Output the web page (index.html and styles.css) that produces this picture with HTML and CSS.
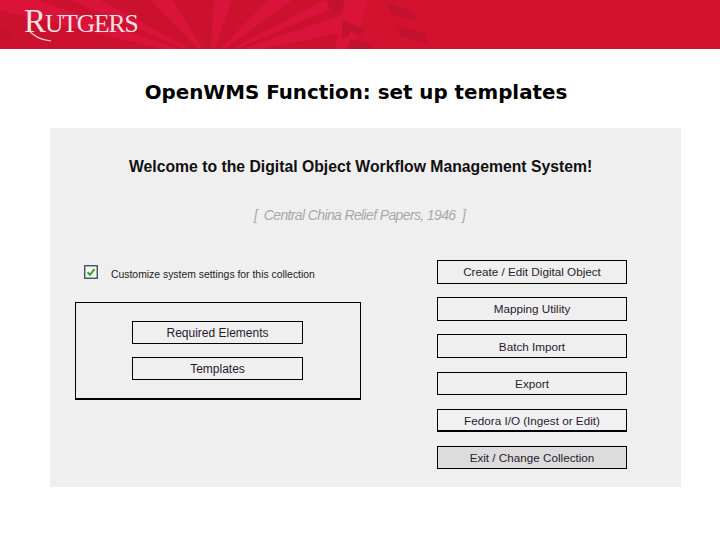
FILE: index.html
```html
<!DOCTYPE html>
<html lang="en">
<head>
<meta charset="utf-8">
<title>OpenWMS Function: set up templates</title>
<link rel="stylesheet" href="styles.css">
</head>
<body>
<header class="banner">
  <svg class="rays" width="720" height="49" viewBox="0 0 720 49" aria-hidden="true">
    <path fill="#cc112e" d="M0 0H345V49H0Z"/>
    <g fill="#d9133a">
      <path d="M210 60L-10 8V-6H20Z"/>
      <path d="M210 60L70 0H100Z"/>
      <path d="M210 60L150 0H172Z"/>
      <path d="M210 60L214 0H232Z"/>
      <path d="M210 60L268 0H292Z"/>
      <path d="M210 60L325 0H352Z"/>
      <path d="M210 60L345 14V32Z"/>
      <path d="M345 0H368L352 49H335Z"/>
    </g>
    <g fill="#c2122f">
      <path d="M0 27L12 31L10 40L0 36Z"/>
      <path d="M327 0H345L337 13L329 8Z"/>
      <path d="M342 20L366 30L360 35L350 31L349 36L342 38Z"/>
      <path d="M350 40L372 43L372 49H347Z"/>
      <path d="M386 2L412 12L418 21L392 14Z"/>
      <path d="M396 25L424 33L428 44L400 36Z"/>
    </g>
  </svg>
  <div class="logo"><span class="logo-cap">R</span>UTGERS</div>
  <svg class="logo-tail" width="30" height="10" viewBox="0 0 30 10" aria-hidden="true">
    <path d="M0 0C5 4 10 8 21 9" fill="none" stroke="#f0d8da" stroke-width="1.2"/>
  </svg>
</header>

<h1 class="title">OpenWMS Function: set up templates</h1>

<main class="panel">
  <h2 class="welcome">Welcome to the Digital Object Workflow Management System!</h2>
  <p class="collection">[ &nbsp;Central China Relief Papers, 1946 &nbsp;]</p>
  <div class="columns">
    <section class="left">
      <label class="check-row">
        <svg class="check" width="14" height="14" viewBox="0 0 14 14" aria-hidden="true">
          <rect x=".75" y=".75" width="12.5" height="12.5" fill="#f4f6f2" stroke="#2c4a56" stroke-width="1.3"/>
          <path d="M3.5 7.2L6 9.8L10.5 4.2" fill="none" stroke="#3f9a35" stroke-width="2"/>
        </svg>
        <span>Customize system settings for this collection</span>
      </label>
      <div class="settings">
        <div class="btn btn-inner">Required Elements</div>
        <div class="btn btn-inner">Templates</div>
      </div>
    </section>
    <nav class="right">
      <div class="btn">Create / Edit Digital Object</div>
      <div class="btn">Mapping Utility</div>
      <div class="btn">Batch Import</div>
      <div class="btn">Export</div>
      <div class="btn btn-heavy">Fedora I/O (Ingest or Edit)</div>
      <div class="btn btn-exit">Exit / Change Collection</div>
    </nav>
  </div>
</main>
</body>
</html>
```
FILE: styles.css
```css
* {
  box-sizing: border-box;
}

html,
body {
  margin: 0;
  padding: 0;
  background: #fff;
}

body {
  width: 720px;
  height: 540px;
  overflow: hidden;
  font-family: "Liberation Sans", Arial, sans-serif;
  color: #111;
}

.banner {
  position: relative;
  height: 49px;
  padding: 8px 0 0 24px;
  background: #d2122f;
}

.rays {
  position: absolute;
  top: 0;
  left: 0;
}

.logo {
  position: relative;
  font-family: "Liberation Serif", "Times New Roman", serif;
  font-size: 25.5px;
  line-height: 27px;
  letter-spacing: -1.1px;
  color: #f3e0e2;
}

.logo-cap {
  font-size: 33px;
  line-height: 27px;
}

.logo-tail {
  position: absolute;
  top: 32px;
  left: 30px;
}

.title {
  margin: 32px 0 0;
  height: 24px;
  padding-right: 8px;
  font-family: "DejaVu Sans", Verdana, sans-serif;
  font-size: 19.85px;
  line-height: 24px;
  font-weight: 700;
  text-align: center;
  color: #000;
}

.panel {
  width: 631px;
  height: 359px;
  margin: 23px 0 0 50px;
  padding: 28px 25px 0;
  background: #efefef;
}

.welcome {
  margin: 0 0 0 54px;
  width: 462px;
  font-size: 15.75px;
  line-height: 22px;
  font-weight: 700;
  white-space: nowrap;
  color: #111;
}

.collection {
  margin: 28px 0 0;
  padding-left: 179px;
  font-size: 14px;
  line-height: 18px;
  font-style: italic;
  letter-spacing: -0.63px;
  color: #a9a9a9;
}

.columns {
  display: flex;
  justify-content: space-between;
  margin-top: 36px;
  padding-right: 29px;
}

.left {
  width: 286px;
}

.check-row {
  display: flex;
  align-items: center;
  gap: 13px;
  height: 24px;
  padding-left: 9px;
  margin-bottom: 18px;
  font-size: 10.4px;
  color: #222;
}

.check-row span {
  margin-top: 5px;
}

.settings {
  display: flex;
  flex-direction: column;
  align-items: center;
  gap: 13px;
  height: 98px;
  padding: 18px 1px 0 0;
  border: 1px solid #000;
  border-bottom-width: 2px;
}

.right {
  display: flex;
  flex-direction: column;
  gap: 13.7px;
  width: 190px;
}

.btn {
  display: flex;
  align-items: center;
  justify-content: center;
  height: 23.5px;
  border: 1px solid #000;
  font-size: 11.7px;
  color: #2a1a30;
}

.btn-inner {
  width: 171px;
  height: 23px;
  font-size: 12px;
}

.btn-heavy {
  border-bottom-width: 2px;
  background: #f1f1f3;
}

.btn-exit {
  background: #dcdcdc;
}
```
